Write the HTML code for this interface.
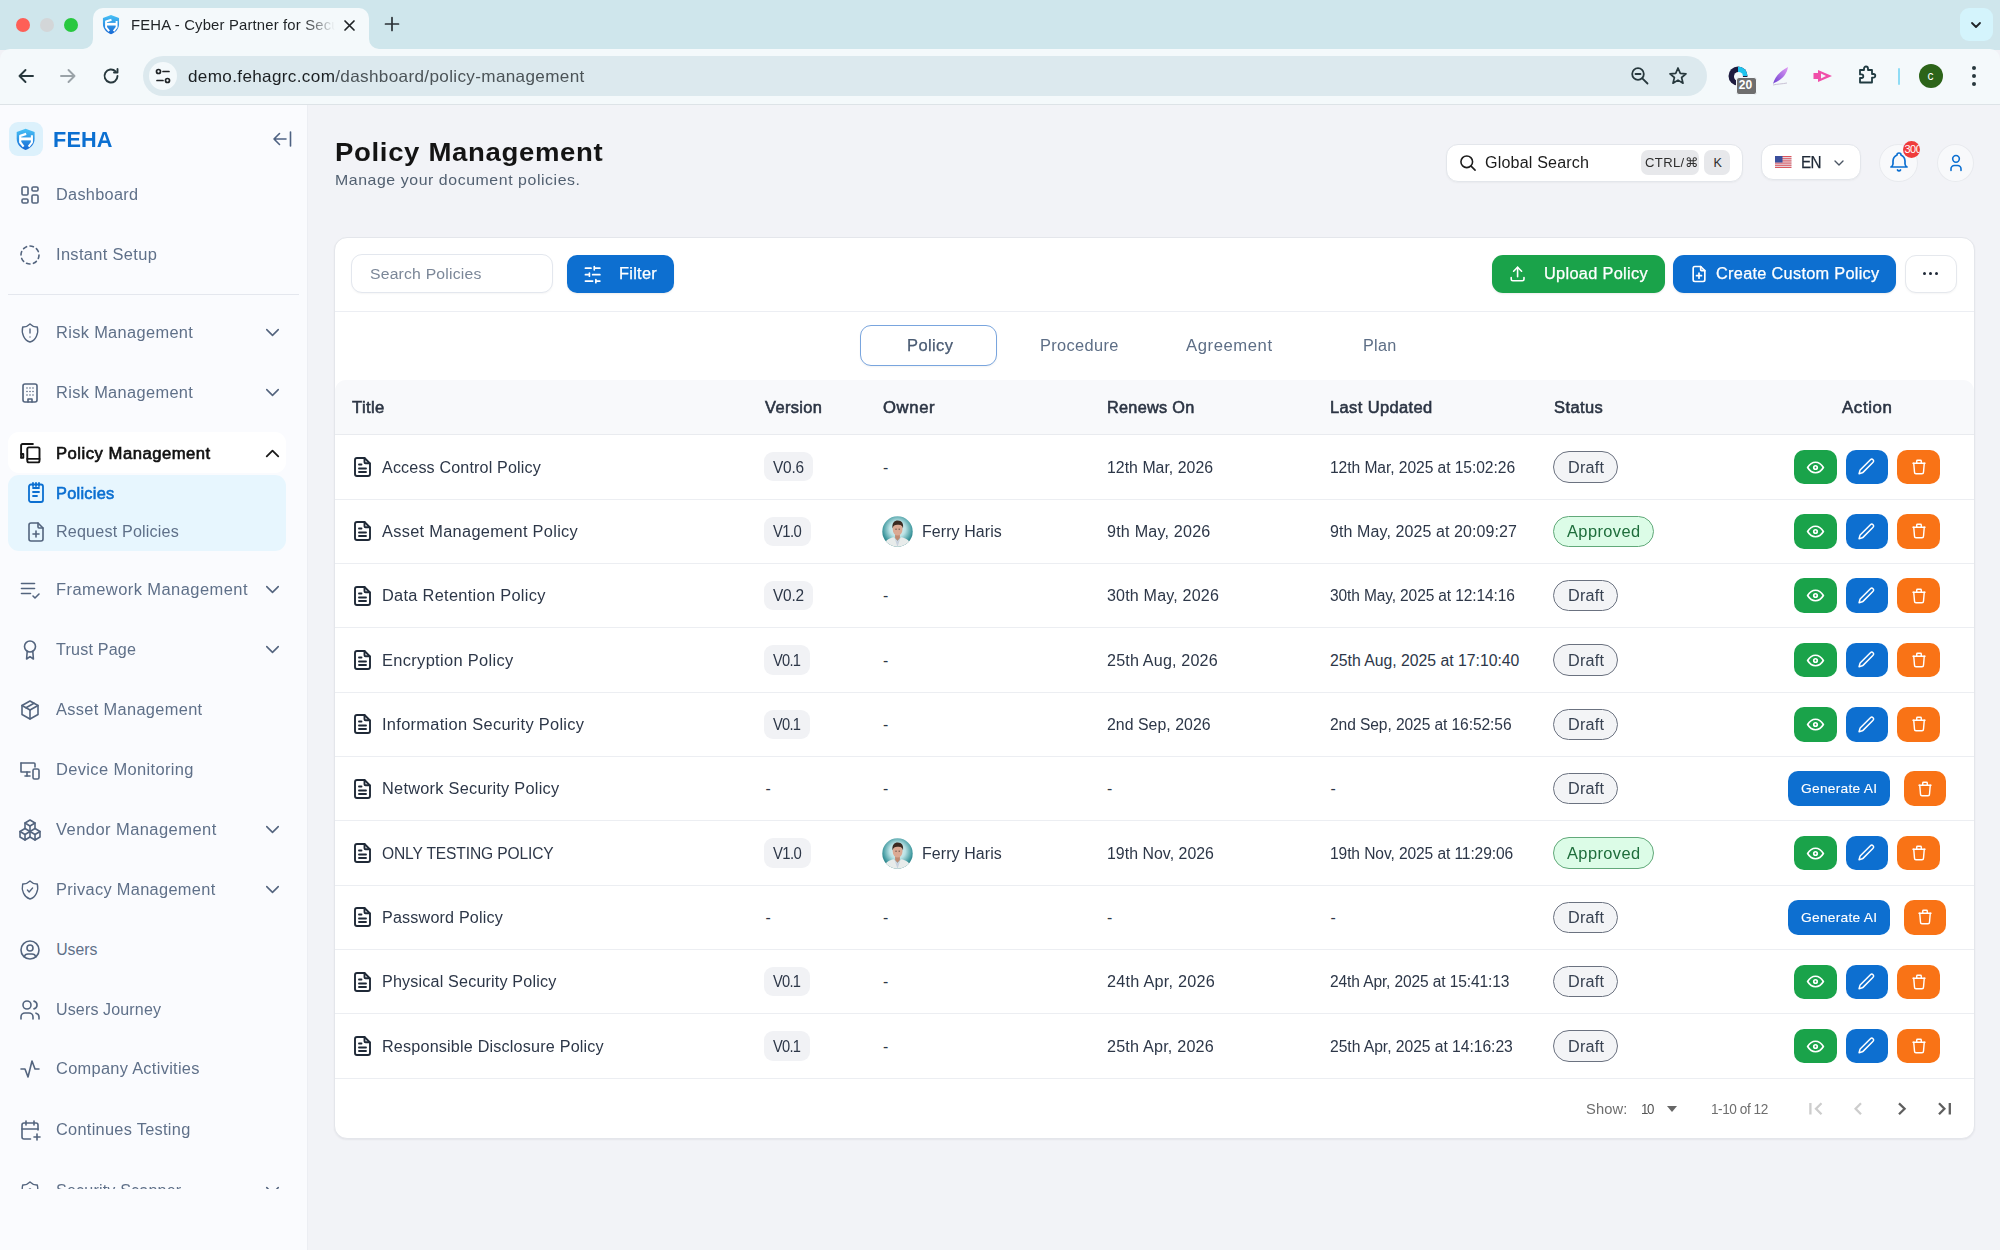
<!DOCTYPE html>
<html><head><meta charset="utf-8"><title>FEHA - Policy Management</title>
<style>
html,body{margin:0;padding:0;width:2000px;height:1250px;overflow:hidden;background:#f1f2f6;font-family:"Liberation Sans",sans-serif}
.t{position:absolute;white-space:nowrap;line-height:1}
svg{display:block}
</style></head><body>
<div style="position:absolute;left:0.00px;top:0.00px;width:2000.00px;height:50.00px;background:#cfe6ec"></div>
<div style="position:absolute;left:15.50px;top:17.50px;width:14.00px;height:14.00px;background:#fe5f57;border-radius:50%"></div>
<div style="position:absolute;left:39.50px;top:17.50px;width:14.00px;height:14.00px;background:#d3d6d8;border-radius:50%"></div>
<div style="position:absolute;left:63.50px;top:17.50px;width:14.00px;height:14.00px;background:#28c840;border-radius:50%"></div>
<div style="position:absolute;left:93.00px;top:8.00px;width:276.00px;height:42.00px;background:#f4f9fb;border-radius:10px 10px 0 0"></div>
<svg style="position:absolute;left:83.00px;top:39.00px;" width="10.00" height="10.00" viewBox="0 0 10 10" fill="none"><path d="M0 10 A10 10 0 0 0 10 0 V10 Z" fill="#f4f9fb"/></svg>
<svg style="position:absolute;left:369.00px;top:39.00px;" width="10.00" height="10.00" viewBox="0 0 10 10" fill="none"><path d="M10 10 A10 10 0 0 1 0 0 V10 Z" fill="#f4f9fb"/></svg>
<svg style="position:absolute;left:96.10px;top:9.00px;" width="30.60" height="30.60" viewBox="0 0 34 34" fill="none"><defs><linearGradient id="fg" x1="0" y1="0" x2="0" y2="1"><stop offset="0" stop-color="#48c2f6"/><stop offset="1" stop-color="#1668d4"/></linearGradient></defs><path d="M16.65 6.7 L25.6 9.9 V16.8 C25.6 22.2 21.8 26 16.65 28.1 C11.5 26 7.7 22.2 7.7 16.8 V9.9 Z" fill="url(#fg)"/><g stroke="#fff" fill="none" stroke-linejoin="round"><path d="M17.2 11.9 L11.2 13.9 V20.3 L14.6 24.6" stroke-width="2.2"/><path d="M22.9 13.3 V20.3 L19.6 24.6" stroke-width="2.1"/><path d="M11.2 16.9 H22.9" stroke-width="2.9"/></g></svg>
<div style="position:absolute;left:125px;top:8px;width:210px;height:34px;overflow:hidden;-webkit-mask-image:linear-gradient(90deg,#000 85%,transparent 100%)">
<div class="t" style="left:6.40px;top:9.72px;font-size:14.50px;color:#1f2326;transform:scaleX(1.0240);transform-origin:0 0;letter-spacing:0.164px;">FEHA - Cyber Partner for Security</div>
</div>
<svg style="position:absolute;left:343.00px;top:18.50px;" width="13.00" height="13.00" viewBox="0 0 13 13" fill="none"><g stroke="#1f2326" stroke-width="1.7" stroke-linecap="round" stroke-linejoin="round"><path d="M2 2 L11 11 M11 2 L2 11"/></g></svg>
<svg style="position:absolute;left:384.00px;top:16.00px;" width="16.00" height="16.00" viewBox="0 0 16 16" fill="none"><g stroke="#2b3135" stroke-width="1.7" stroke-linecap="round" stroke-linejoin="round"><path d="M8 1.5 V14.5 M1.5 8 H14.5"/></g></svg>
<div style="position:absolute;left:1959.50px;top:8.00px;width:33.00px;height:33.00px;background:#d4f4fc;border-radius:9px"></div>
<svg style="position:absolute;left:1969.00px;top:18.00px;" width="14.00" height="14.00" viewBox="0 0 14 14" fill="none"><path d="M3 5 L7 9 L11 5" stroke="#1f2326" stroke-width="1.8" fill="none" stroke-linecap="round" stroke-linejoin="round"/></svg>
<div style="position:absolute;left:0.00px;top:49.00px;width:2000.00px;height:55.00px;background:#f4f9fb;border-radius:10px 10px 0 0"></div>
<div style="position:absolute;left:0.00px;top:104.00px;width:2000.00px;height:1.00px;background:#dde3e7"></div>
<svg style="position:absolute;left:16.00px;top:66.00px;" width="20.00" height="20.00" viewBox="0 0 20 20" fill="none"><path d="M17 10 H3.5 M9.5 4 L3.5 10 L9.5 16" stroke="#27383d" stroke-width="1.9" fill="none" stroke-linecap="round" stroke-linejoin="round"/></svg>
<svg style="position:absolute;left:58.00px;top:66.00px;" width="20.00" height="20.00" viewBox="0 0 20 20" fill="none"><path d="M3 10 H16.5 M10.5 4 L16.5 10 L10.5 16" stroke="#9aa3a8" stroke-width="1.9" fill="none" stroke-linecap="round" stroke-linejoin="round"/></svg>
<svg style="position:absolute;left:101.00px;top:66.00px;" width="20.00" height="20.00" viewBox="0 0 20 20" fill="none"><path d="M16.5 10 A6.5 6.5 0 1 1 14.6 5.4" stroke="#27383d" stroke-width="1.9" fill="none" stroke-linecap="round"/><path d="M16.5 3 V6.5 H13" stroke="#27383d" stroke-width="1.9" fill="none" stroke-linecap="round" stroke-linejoin="round"/></svg>
<div style="position:absolute;left:143.00px;top:56.00px;width:1564.00px;height:40.00px;background:#dce9ee;border-radius:20px"></div>
<div style="position:absolute;left:149.00px;top:62.00px;width:28.00px;height:28.00px;background:#f4f9fb;border-radius:50%"></div>
<svg style="position:absolute;left:153.00px;top:66.00px;" width="20.00" height="20.00" viewBox="0 0 20 20" fill="none"><g stroke="#1f2326" stroke-width="1.7" fill="none" stroke-linecap="round"><circle cx="5.5" cy="5.5" r="2"/><path d="M10 5.5 H16"/><path d="M4 14.5 H10"/><circle cx="14.5" cy="14.5" r="2"/></g></svg>
<div class="t" style="left:187.80px;top:67.83px;font-size:16.50px;color:#1b1f22;transform:scaleX(1.0380);transform-origin:0 0;letter-spacing:0.325px;">demo.fehagrc.com<span style="color:#4b5357">/dashboard/policy-management</span></div>
<svg style="position:absolute;left:1630.00px;top:66.00px;" width="20.00" height="20.00" viewBox="0 0 20 20" fill="none"><g stroke="#27383d" stroke-width="1.8" fill="none" stroke-linecap="round"><circle cx="8" cy="8" r="5.8"/><path d="M5.5 8 H10.5"/><path d="M12.3 12.3 L17.5 17.5"/></g></svg>
<svg style="position:absolute;left:1668.00px;top:66.00px;" width="20.00" height="20.00" viewBox="0 0 20 20" fill="none"><path d="M10 2 L12.3 7.4 L18 7.8 L13.6 11.5 L15 17.2 L10 14.1 L5 17.2 L6.4 11.5 L2 7.8 L7.7 7.4 Z" stroke="#27383d" stroke-width="1.7" fill="none" stroke-linejoin="round"/></svg>
<svg style="position:absolute;left:1727.00px;top:65.00px;" width="22.00" height="22.00" viewBox="0 0 22 22" fill="none"><circle cx="11" cy="11" r="9.5" fill="#1d1b3f"/><path d="M11 1.5 A9.5 9.5 0 0 1 20.5 11 L11 11 Z" fill="#1fc4ee"/><circle cx="11.5" cy="11.5" r="4.5" fill="#f3f8fb"/></svg>
<div style="position:absolute;left:1736.00px;top:77.00px;width:19.00px;height:15.50px;background:#6e6e6e;border-radius:3px;border:1px solid #f3f8fb"></div>
<div class="t" style="left:1736px;top:78px;width:19px;text-align:center;font-size:12px;line-height:14px;font-weight:700;color:#fff">20</div>
<svg style="position:absolute;left:1770.00px;top:65.00px;" width="22.00" height="22.00" viewBox="0 0 22 22" fill="none"><defs><linearGradient id="fe" x1="0" y1="1" x2="1" y2="0"><stop offset="0" stop-color="#6d3fd1"/><stop offset="1" stop-color="#e29cf4"/></linearGradient></defs><path d="M3 19 C5 12 10 6 18 2 C17 9 12 15 4 18 Z" fill="url(#fe)"/><path d="M3 20 C7 19 12 19 17 18" stroke="#c9c3d6" stroke-width="1" fill="none"/></svg>
<svg style="position:absolute;left:1812.00px;top:65.00px;" width="22.00" height="22.00" viewBox="0 0 22 22" fill="none"><path d="M1.5 8 H6 V5 L20 11 L6 17 V14 H1.5 Z" fill="#f04fa9"/><path d="M9 8.5 L14 11 L9 13.5 Z" fill="#f3f8fb"/></svg>
<svg style="position:absolute;left:1856.00px;top:64.00px;" width="22.00" height="22.00" viewBox="0 0 22 22" fill="none"><path d="M4 6 H8 V4.5 A2 2 0 0 1 12 4.5 V6 H16 V10 H17.5 A1.8 1.8 0 0 1 17.5 13.6 H16 V18.5 H4 V14 H5.5 A1.8 1.8 0 0 0 5.5 10.4 H4 Z" stroke="#1f3a40" stroke-width="1.8" fill="none" stroke-linejoin="round"/></svg>
<div style="position:absolute;left:1897.80px;top:67.50px;width:2.20px;height:17.50px;background:#8fdcf5;border-radius:1px"></div>
<div style="position:absolute;left:1918.50px;top:64.00px;width:24.00px;height:24.00px;background:#2c6419;border-radius:50%"></div>
<div class="t" style="left:1918.5px;top:69px;width:24px;text-align:center;font-size:12px;line-height:14px;color:#fff">c</div>
<div style="position:absolute;left:1971.50px;top:66.00px;width:4.00px;height:4.00px;background:#27383d;border-radius:50%"></div>
<div style="position:absolute;left:1971.50px;top:74.00px;width:4.00px;height:4.00px;background:#27383d;border-radius:50%"></div>
<div style="position:absolute;left:1971.50px;top:82.00px;width:4.00px;height:4.00px;background:#27383d;border-radius:50%"></div>
<div style="position:absolute;left:0.00px;top:105.00px;width:2000.00px;height:1145.00px;background:#f2f3f7"></div>
<div style="position:absolute;left:0.00px;top:105.00px;width:308.00px;height:1145.00px;background:#fafbfe;border-right:1px solid #eceef3;box-sizing:border-box"></div>
<div style="position:absolute;left:9.00px;top:122.00px;width:34.00px;height:34.00px;background:#dcf1fc;border-radius:9px"></div>
<svg style="position:absolute;left:9.00px;top:122.00px;" width="34.00" height="34.00" viewBox="0 0 34 34" fill="none"><defs><linearGradient id="lg" x1="0" y1="0" x2="0" y2="1"><stop offset="0" stop-color="#48c2f6"/><stop offset="1" stop-color="#1668d4"/></linearGradient></defs><path d="M16.65 6.7 L25.6 9.9 V16.8 C25.6 22.2 21.8 26 16.65 28.1 C11.5 26 7.7 22.2 7.7 16.8 V9.9 Z" fill="url(#lg)"/><g stroke="#fff" fill="none" stroke-linejoin="round"><path d="M17.2 11.9 L11.2 13.9 V20.3 L14.6 24.6" stroke-width="2.2"/><path d="M22.9 13.3 V20.3 L19.6 24.6" stroke-width="2.1"/><path d="M11.2 16.9 H22.9" stroke-width="2.9"/></g></svg>
<div class="t" style="left:53.20px;top:129.80px;font-size:21.50px;color:#0b6fd1;transform:scaleX(1.0085);transform-origin:0 0;font-weight:700;letter-spacing:0.166px;">FEHA</div>
<svg style="position:absolute;left:272.00px;top:131.00px;" width="20.00" height="16.00" viewBox="0 0 20 16" fill="none"><g stroke="#4e6282" stroke-width="1.6" fill="none" stroke-linecap="round" stroke-linejoin="round"><path d="M2 8 H14 M7.5 2.5 L2 8 L7.5 13.5"/><path d="M18.5 1 V15"/></g></svg>
<svg style="position:absolute;left:18.00px;top:182.60px;" width="24.00" height="24.00" viewBox="0 0 24 24" fill="none"><g stroke="#53647e" stroke-width="1.6" stroke-linecap="round" stroke-linejoin="round"><rect x="4" y="4" width="6" height="8" rx="1.3"/><rect x="4" y="16" width="6" height="4" rx="1.3"/><rect x="14" y="12" width="6" height="8" rx="1.3"/><rect x="14" y="4" width="6" height="4" rx="1.3"/></g></svg>
<div class="t" style="left:56.20px;top:186.82px;font-size:15.80px;color:#5f7089;transform:scaleX(1.0307);transform-origin:0 0;letter-spacing:0.295px;">Dashboard</div>
<svg style="position:absolute;left:18.00px;top:242.80px;" width="24.00" height="24.00" viewBox="0 0 24 24" fill="none"><g stroke="#53647e" stroke-width="1.6" stroke-linecap="round" stroke-linejoin="round"><path d="M8.56 3.69a9 9 0 0 0 -2.92 1.95"/><path d="M3.69 8.56a9 9 0 0 0 -.69 3.44"/><path d="M3.69 15.44a9 9 0 0 0 1.95 2.92"/><path d="M8.56 20.31a9 9 0 0 0 3.44 .69"/><path d="M15.44 20.31a9 9 0 0 0 2.92 -1.95"/><path d="M20.31 15.44a9 9 0 0 0 .69 -3.44"/><path d="M20.31 8.56a9 9 0 0 0 -1.95 -2.92"/><path d="M15.44 3.69a9 9 0 0 0 -3.44 -.69"/></g></svg>
<div class="t" style="left:56.20px;top:247.02px;font-size:15.80px;color:#5f7089;transform:scaleX(1.0408);transform-origin:0 0;letter-spacing:0.315px;">Instant Setup</div>
<svg style="position:absolute;left:18.00px;top:321.10px;" width="24.00" height="24.00" viewBox="0 0 24 24" fill="none"><g stroke="#53647e" stroke-width="1.6" stroke-linecap="round" stroke-linejoin="round"><g transform="translate(12 0) scale(0.86 1) translate(-12 0)"><path d="M12 3a12 12 0 0 0 8.5 3a12 12 0 0 1 -8.5 15a12 12 0 0 1 -8.5 -15a12 12 0 0 0 8.5 -3"/><path d="M12 8v4"/><path d="M12 16h.01"/></g></g></svg>
<div class="t" style="left:56.20px;top:325.32px;font-size:15.80px;color:#5f7089;transform:scaleX(1.0369);transform-origin:0 0;letter-spacing:0.334px;">Risk Management</div>
<svg style="position:absolute;left:260.80px;top:321.10px;" width="23.00" height="23.00" viewBox="0 0 24 24" fill="none"><g stroke="#53647e" stroke-width="1.6" stroke-linecap="round" stroke-linejoin="round"><path d="M6 9l6 6l6 -6"/></g></svg>
<svg style="position:absolute;left:18.00px;top:381.10px;" width="24.00" height="24.00" viewBox="0 0 24 24" fill="none"><g stroke="#53647e" stroke-width="1.6" stroke-linecap="round" stroke-linejoin="round"><rect x="5" y="3" width="14" height="18" rx="2"/><path d="M9 7h.01M12 7h.01M15 7h.01M9 10.5h.01M12 10.5h.01M15 10.5h.01M9 14h.01M12 14h.01M15 14h.01"/><path d="M10 21v-3h4v3"/></g></svg>
<div class="t" style="left:56.20px;top:385.32px;font-size:15.80px;color:#5f7089;transform:scaleX(1.0369);transform-origin:0 0;letter-spacing:0.334px;">Risk Management</div>
<svg style="position:absolute;left:260.80px;top:381.10px;" width="23.00" height="23.00" viewBox="0 0 24 24" fill="none"><g stroke="#53647e" stroke-width="1.6" stroke-linecap="round" stroke-linejoin="round"><path d="M6 9l6 6l6 -6"/></g></svg>
<svg style="position:absolute;left:18.00px;top:577.90px;" width="24.00" height="24.00" viewBox="0 0 24 24" fill="none"><g stroke="#53647e" stroke-width="1.6" stroke-linecap="round" stroke-linejoin="round"><path d="M3.5 5.5h13"/><path d="M3.5 10.5h13"/><path d="M3.5 15.5h9"/><path d="M15 18l2 2l4 -4"/></g></svg>
<div class="t" style="left:56.20px;top:582.12px;font-size:15.80px;color:#5f7089;transform:scaleX(1.0443);transform-origin:0 0;letter-spacing:0.409px;">Framework Management</div>
<svg style="position:absolute;left:260.80px;top:577.90px;" width="23.00" height="23.00" viewBox="0 0 24 24" fill="none"><g stroke="#53647e" stroke-width="1.6" stroke-linecap="round" stroke-linejoin="round"><path d="M6 9l6 6l6 -6"/></g></svg>
<svg style="position:absolute;left:18.00px;top:637.90px;" width="24.00" height="24.00" viewBox="0 0 24 24" fill="none"><g stroke="#53647e" stroke-width="1.6" stroke-linecap="round" stroke-linejoin="round"><circle cx="12" cy="8.5" r="5.5"/><path d="M9.2 13.3 L8.6 21 L12 18.6 L15.4 21 L14.8 13.3"/></g></svg>
<div class="t" style="left:56.20px;top:642.12px;font-size:15.80px;color:#5f7089;transform:scaleX(1.0213);transform-origin:0 0;letter-spacing:0.181px;">Trust Page</div>
<svg style="position:absolute;left:260.80px;top:637.90px;" width="23.00" height="23.00" viewBox="0 0 24 24" fill="none"><g stroke="#53647e" stroke-width="1.6" stroke-linecap="round" stroke-linejoin="round"><path d="M6 9l6 6l6 -6"/></g></svg>
<svg style="position:absolute;left:18.00px;top:697.90px;" width="24.00" height="24.00" viewBox="0 0 24 24" fill="none"><g stroke="#53647e" stroke-width="1.6" stroke-linecap="round" stroke-linejoin="round"><path d="M12 3l8 4.5l0 9l-8 4.5l-8 -4.5l0 -9l8 -4.5"/><path d="M12 12l8 -4.5"/><path d="M12 12l0 9"/><path d="M12 12l-8 -4.5"/><path d="M16 5.25l-8 4.5"/></g></svg>
<div class="t" style="left:56.20px;top:702.12px;font-size:15.80px;color:#5f7089;transform:scaleX(1.0364);transform-origin:0 0;letter-spacing:0.329px;">Asset Management</div>
<svg style="position:absolute;left:18.00px;top:757.70px;" width="24.00" height="24.00" viewBox="0 0 24 24" fill="none"><g stroke="#53647e" stroke-width="1.6" stroke-linecap="round" stroke-linejoin="round"><path d="M3 5h13a1 1 0 0 1 1 1v3"/><path d="M3 5v9h9"/><path d="M7 18h5"/><path d="M9 14v4"/><rect x="15" y="11" width="6" height="10" rx="1.5"/></g></svg>
<div class="t" style="left:56.20px;top:761.92px;font-size:15.80px;color:#5f7089;transform:scaleX(1.0427);transform-origin:0 0;letter-spacing:0.337px;">Device Monitoring</div>
<svg style="position:absolute;left:18.00px;top:817.70px;" width="24.00" height="24.00" viewBox="0 0 24 24" fill="none"><g stroke="#53647e" stroke-width="1.6" stroke-linecap="round" stroke-linejoin="round"><path d="M7 16.5l-5 -3l5 -3l5 3v5.5l-5 3z"/><path d="M2 13.5v5.5l5 3"/><path d="M7 16.545l5 -3.03"/><path d="M17 16.5l-5 -3l5 -3l5 3v5.5l-5 3z"/><path d="M12 19l5 3"/><path d="M17 16.5l5 -3"/><path d="M12 13.5v-5.5l-5 -3l5 -3l5 3v5.5"/><path d="M7 5.03v5.455"/><path d="M12 8l5 -3"/></g></svg>
<div class="t" style="left:56.20px;top:821.92px;font-size:15.80px;color:#5f7089;transform:scaleX(1.0453);transform-origin:0 0;letter-spacing:0.414px;">Vendor Management</div>
<svg style="position:absolute;left:260.80px;top:817.70px;" width="23.00" height="23.00" viewBox="0 0 24 24" fill="none"><g stroke="#53647e" stroke-width="1.6" stroke-linecap="round" stroke-linejoin="round"><path d="M6 9l6 6l6 -6"/></g></svg>
<svg style="position:absolute;left:18.00px;top:877.90px;" width="24.00" height="24.00" viewBox="0 0 24 24" fill="none"><g stroke="#53647e" stroke-width="1.6" stroke-linecap="round" stroke-linejoin="round"><g transform="translate(12 0) scale(0.86 1) translate(-12 0)"><path d="M11.46 20.846a12 12 0 0 1 -7.96 -14.846a12 12 0 0 0 8.5 -3a12 12 0 0 0 8.5 3a12 12 0 0 1 -8.5 15"/><path d="M9 12l2 2l4 -4"/></g></g></svg>
<div class="t" style="left:56.20px;top:882.12px;font-size:15.80px;color:#5f7089;transform:scaleX(1.0358);transform-origin:0 0;letter-spacing:0.312px;">Privacy Management</div>
<svg style="position:absolute;left:260.80px;top:877.90px;" width="23.00" height="23.00" viewBox="0 0 24 24" fill="none"><g stroke="#53647e" stroke-width="1.6" stroke-linecap="round" stroke-linejoin="round"><path d="M6 9l6 6l6 -6"/></g></svg>
<svg style="position:absolute;left:18.00px;top:937.90px;" width="24.00" height="24.00" viewBox="0 0 24 24" fill="none"><g stroke="#53647e" stroke-width="1.6" stroke-linecap="round" stroke-linejoin="round"><path d="M12 12m-9 0a9 9 0 1 0 18 0a9 9 0 1 0 -18 0"/><path d="M12 10m-3 0a3 3 0 1 0 6 0a3 3 0 1 0 -6 0"/><path d="M6.168 18.849a4 4 0 0 1 3.832 -2.849h4a4 4 0 0 1 3.834 2.855"/></g></svg>
<div class="t" style="left:56.20px;top:942.12px;font-size:15.80px;color:#5f7089;letter-spacing:-0.016px;">Users</div>
<svg style="position:absolute;left:18.00px;top:997.70px;" width="24.00" height="24.00" viewBox="0 0 24 24" fill="none"><g stroke="#53647e" stroke-width="1.6" stroke-linecap="round" stroke-linejoin="round"><path d="M9 7m-4 0a4 4 0 1 0 8 0a4 4 0 1 0 -8 0"/><path d="M3 21v-2a4 4 0 0 1 4 -4h4a4 4 0 0 1 4 4v2"/><path d="M16 3.13a4 4 0 0 1 0 7.75"/><path d="M21 21v-2a4 4 0 0 0 -3 -3.85"/></g></svg>
<div class="t" style="left:56.20px;top:1001.92px;font-size:15.80px;color:#5f7089;transform:scaleX(1.0152);transform-origin:0 0;letter-spacing:0.128px;">Users Journey</div>
<svg style="position:absolute;left:18.00px;top:1057.20px;" width="24.00" height="24.00" viewBox="0 0 24 24" fill="none"><g stroke="#53647e" stroke-width="1.6" stroke-linecap="round" stroke-linejoin="round"><path d="M3 12h4l3 8l4 -16l3 8h4"/></g></svg>
<div class="t" style="left:56.20px;top:1061.42px;font-size:15.80px;color:#5f7089;transform:scaleX(1.0369);transform-origin:0 0;letter-spacing:0.289px;">Company Activities</div>
<svg style="position:absolute;left:18.00px;top:1117.70px;" width="24.00" height="24.00" viewBox="0 0 24 24" fill="none"><g stroke="#53647e" stroke-width="1.6" stroke-linecap="round" stroke-linejoin="round"><path d="M12.5 21h-6.5a2 2 0 0 1 -2 -2v-12a2 2 0 0 1 2 -2h12a2 2 0 0 1 2 2v5"/><path d="M16 3v4"/><path d="M8 3v4"/><path d="M4 11h16"/><path d="M16 19h6"/><path d="M19 16v6"/></g></svg>
<div class="t" style="left:56.20px;top:1121.92px;font-size:15.80px;color:#5f7089;transform:scaleX(1.0351);transform-origin:0 0;letter-spacing:0.274px;">Continues Testing</div>
<div style="position:absolute;left:8.00px;top:293.50px;width:291.00px;height:1.50px;background:#e4e7ee"></div>
<div style="position:absolute;left:8.00px;top:432.00px;width:278.00px;height:41.00px;background:#ffffff;border-radius:11px"></div>
<svg style="position:absolute;left:17.50px;top:441.00px;" width="24.00" height="24.00" viewBox="0 0 24 24" fill="none"><g stroke="#141414" stroke-width="1.9" stroke-linecap="round" stroke-linejoin="round"><path d="M14.9 3 H4.6 A1.5 1.5 0 0 0 3.1 4.5 V16.5"/><path d="M3.1 13 H5.3 V16.8 H3.1"/><rect x="9.3" y="6.4" width="12.2" height="15" rx="1.6"/><path d="M9.3 17.9 H21.5"/></g></svg>
<div class="t" style="left:56.20px;top:445.82px;font-size:15.80px;color:#111111;transform:scaleX(1.0543);transform-origin:0 0;-webkit-text-stroke:0.6px #111111;letter-spacing:0.469px;">Policy Management</div>
<svg style="position:absolute;left:260.80px;top:441.60px;" width="23.00" height="23.00" viewBox="0 0 24 24" fill="none"><g stroke="#1b1b1b" stroke-width="1.9" stroke-linecap="round" stroke-linejoin="round"><path d="M6 15l6 -6l6 6"/></g></svg>
<div style="position:absolute;left:8.00px;top:475.00px;width:278.00px;height:75.50px;background:#e7f6fe;border-radius:11px"></div>
<svg style="position:absolute;left:24.00px;top:481.40px;" width="24.00" height="24.00" viewBox="0 0 24 24" fill="none"><g stroke="#0b6fd1" stroke-width="1.8" stroke-linecap="round" stroke-linejoin="round"><rect x="5" y="3.5" width="14" height="17.5" rx="2"/><path d="M9 7h6"/><path d="M9 11h6"/><path d="M9 15h4"/><path d="M9 2v3M12 2v3M15 2v3"/></g></svg>
<div class="t" style="left:56.20px;top:485.62px;font-size:15.80px;color:#0b6fd1;transform:scaleX(1.0340);transform-origin:0 0;-webkit-text-stroke:0.6px #0b6fd1;letter-spacing:0.263px;">Policies</div>
<svg style="position:absolute;left:24.00px;top:520.10px;" width="24.00" height="24.00" viewBox="0 0 24 24" fill="none"><g stroke="#53647e" stroke-width="1.6" stroke-linecap="round" stroke-linejoin="round"><path d="M14 3v4a1 1 0 0 0 1 1h4"/><path d="M17 21h-10a2 2 0 0 1 -2 -2v-14a2 2 0 0 1 2 -2h7l5 5v11a2 2 0 0 1 -2 2z"/><path d="M12 11l0 6"/><path d="M9 14l6 0"/></g></svg>
<div class="t" style="left:56.20px;top:524.22px;font-size:15.80px;color:#5f7089;transform:scaleX(1.0216);transform-origin:0 0;letter-spacing:0.169px;">Request Policies</div>
<div style="position:absolute;left:0;top:1160px;width:307px;height:28.8px;overflow:hidden">
<svg style="position:absolute;left:18.00px;top:18.70px;" width="24.00" height="24.00" viewBox="0 0 24 24" fill="none"><g stroke="#53647e" stroke-width="1.6" stroke-linecap="round" stroke-linejoin="round"><g transform="translate(12 0) scale(0.86 1) translate(-12 0)"><path d="M12 3a12 12 0 0 0 8.5 3a12 12 0 0 1 -8.5 15a12 12 0 0 1 -8.5 -15a12 12 0 0 0 8.5 -3"/><path d="M12 11m-1 0a1 1 0 1 0 2 0a1 1 0 1 0 -2 0"/></g></g></svg>
<div class="t" style="left:56.20px;top:23.42px;font-size:15.80px;color:#5f7089;transform:scaleX(1.0203);transform-origin:0 0;letter-spacing:0.163px;">Security Scanner</div>
<svg style="position:absolute;left:260.80px;top:18.70px;" width="23.00" height="23.00" viewBox="0 0 24 24" fill="none"><g stroke="#53647e" stroke-width="1.6" stroke-linecap="round" stroke-linejoin="round"><path d="M6 9l6 6l6 -6"/></g></svg>
</div>
<div class="t" style="left:335.00px;top:138.56px;font-size:26.50px;color:#141414;transform:scaleX(1.0403);transform-origin:0 0;font-weight:700;letter-spacing:0.623px;">Policy Management</div>
<div class="t" style="left:335.20px;top:173.47px;font-size:14.80px;color:#526071;transform:scaleX(1.0725);transform-origin:0 0;letter-spacing:0.531px;">Manage your document policies.</div>
<div style="position:absolute;left:1446.30px;top:143.60px;width:297.00px;height:38.40px;background:#fff;border:1px solid #e3e6eb;border-radius:12px;box-sizing:border-box;box-shadow:0 1px 2px rgba(0,0,0,.04)"></div>
<svg style="position:absolute;left:1458.30px;top:153.20px;" width="20.00" height="20.00" viewBox="0 0 24 24" fill="none"><g stroke="#1c1c1c" stroke-width="1.9" stroke-linecap="round" stroke-linejoin="round"><path d="M10.5 10.5m-7 0a7 7 0 1 0 14 0a7 7 0 1 0 -14 0"/><path d="M20.5 20.5l-4.8 -4.8"/></g></svg>
<div class="t" style="left:1485.40px;top:155.02px;font-size:15.80px;color:#1c1c1c;transform:scaleX(1.0191);transform-origin:0 0;letter-spacing:0.159px;">Global Search</div>
<div style="position:absolute;left:1641.40px;top:150.20px;width:58.00px;height:25.00px;background:#e7e8eb;border-radius:7px"></div>
<div class="t" style="left:1645.40px;top:157.13px;font-size:12.60px;color:#2e2e2e;transform:scaleX(1.0384);transform-origin:0 0;letter-spacing:0.353px;">CTRL/⌘</div>
<div style="position:absolute;left:1704.40px;top:150.20px;width:25.80px;height:25.00px;background:#e7e8eb;border-radius:7px"></div>
<div class="t" style="left:1713.60px;top:157.13px;font-size:12.60px;color:#2e2e2e;">K</div>
<div style="position:absolute;left:1761.40px;top:144.40px;width:100.00px;height:36.00px;background:#fff;border:1px solid #e3e6eb;border-radius:12px;box-sizing:border-box;box-shadow:0 1px 2px rgba(0,0,0,.04)"></div>
<svg style="position:absolute;left:1775.00px;top:155.50px;" width="16.50" height="12.00" viewBox="0 0 16.5 12" fill="none"><rect width="16.5" height="12" rx="1.5" fill="#e8eef6"/><rect y="0.00" width="16.5" height="0.92" fill="#d9464e"/><rect y="1.85" width="16.5" height="0.92" fill="#d9464e"/><rect y="3.70" width="16.5" height="0.92" fill="#d9464e"/><rect y="5.55" width="16.5" height="0.92" fill="#d9464e"/><rect y="7.40" width="16.5" height="0.92" fill="#d9464e"/><rect y="9.25" width="16.5" height="0.92" fill="#d9464e"/><rect y="11.10" width="16.5" height="0.92" fill="#d9464e"/><rect width="7.5" height="6.5" fill="#3b4f9c"/></svg>
<div class="t" style="left:1801.00px;top:155.12px;font-size:15.80px;color:#1f2937;transform:scaleX(0.9657);transform-origin:0 0;-webkit-text-stroke:0.25px #1f2937;letter-spacing:-0.750px;">EN</div>
<svg style="position:absolute;left:1831.00px;top:155.00px;" width="16.00" height="16.00" viewBox="0 0 24 24" fill="none"><g stroke="#4b5563" stroke-width="2" stroke-linecap="round" stroke-linejoin="round"><path d="M6 9l6 6l6 -6"/></g></svg>
<div style="position:absolute;left:1879.40px;top:143.80px;width:38.40px;height:38.40px;background:#f8f9fb;border:1px solid #e8eaee;border-radius:50%;box-sizing:border-box"></div>
<svg style="position:absolute;left:1886.90px;top:150.30px;" width="24.00" height="24.00" viewBox="0 0 24 24" fill="none"><g stroke="#0b6fd1" stroke-width="1.7" stroke-linecap="round" stroke-linejoin="round"><path d="M10 5a2 2 0 1 1 4 0a7 7 0 0 1 4 6v3a4 4 0 0 0 2 3h-16a4 4 0 0 0 2 -3v-3a7 7 0 0 1 4 -6"/><path d="M10.5 20a1.8 1.8 0 0 0 3 0"/></g></svg>
<div style="position:absolute;left:1902.5px;top:141px;width:17px;height:17px;border-radius:50%;background:#ef3b3b;overflow:hidden"><div class="t" style="left:2px;top:2px;font-size:11px;line-height:12px;color:#fff;letter-spacing:-0.5px">300</div></div>
<div style="position:absolute;left:1936.80px;top:143.80px;width:37.00px;height:38.40px;background:#f8f9fb;border:1px solid #e8eaee;border-radius:50%;box-sizing:border-box"></div>
<svg style="position:absolute;left:1945.50px;top:153.00px;" width="20.00" height="20.00" viewBox="0 0 24 24" fill="none"><g stroke="#0b6fd1" stroke-width="1.9" stroke-linecap="round" stroke-linejoin="round"><path d="M12 7m-4 0a4 4 0 1 0 8 0a4 4 0 1 0 -8 0"/><path d="M6 21v-2a4 4 0 0 1 4 -4h4a4 4 0 0 1 4 4v2"/></g></svg>
<div style="position:absolute;left:333.60px;top:237.00px;width:1641.40px;height:902.40px;background:#fff;border:1px solid #e4e6eb;border-radius:13px;box-sizing:border-box;box-shadow:0 1px 2px rgba(16,24,40,.06)"></div>
<div style="position:absolute;left:350.80px;top:254.20px;width:202.20px;height:39.30px;background:#fff;border:1px solid #e3e7ee;border-radius:11px;box-sizing:border-box;box-shadow:0 1px 2px rgba(0,0,0,.04)"></div>
<div class="t" style="left:369.60px;top:266.46px;font-size:15.40px;color:#7b8798;transform:scaleX(1.0242);transform-origin:0 0;letter-spacing:0.183px;">Search Policies</div>
<div style="position:absolute;left:566.70px;top:254.80px;width:107.00px;height:38.40px;background:#0d6fd0;border-radius:10px;box-shadow:0 1px 2px rgba(0,0,0,.08)"></div>
<svg style="position:absolute;left:582.60px;top:264.80px;" width="19.30" height="19.30" viewBox="0 0 24 24" fill="none"><g stroke="#ffffff" stroke-width="2.1" stroke-linecap="round" stroke-linejoin="round"><path d="M21 4h-7M10 4H3M21 12h-9M8 12H3M21 20h-5M12 20H3M14 2v4M8 10v4M16 18v4"/></g></svg>
<div class="t" style="left:618.80px;top:265.82px;font-size:15.80px;color:#ffffff;transform:scaleX(1.0365);transform-origin:0 0;-webkit-text-stroke:0.25px #ffffff;letter-spacing:0.255px;">Filter</div>
<div style="position:absolute;left:1491.80px;top:255.00px;width:173.20px;height:38.20px;background:#1aa34a;border-radius:11px;box-shadow:0 1px 2px rgba(0,0,0,.08)"></div>
<svg style="position:absolute;left:1508.30px;top:263.80px;" width="19.20" height="19.20" viewBox="0 0 24 24" fill="none"><g stroke="#ffffff" stroke-width="2" stroke-linecap="round" stroke-linejoin="round"><path d="M4 17v2a2 2 0 0 0 2 2h12a2 2 0 0 0 2 -2v-2"/><path d="M7 9l5 -5l5 5"/><path d="M12 4v12"/></g></svg>
<div class="t" style="left:1543.80px;top:265.52px;font-size:15.80px;color:#ffffff;transform:scaleX(1.0355);transform-origin:0 0;-webkit-text-stroke:0.25px #ffffff;letter-spacing:0.285px;">Upload Policy</div>
<div style="position:absolute;left:1673.00px;top:255.00px;width:222.80px;height:38.20px;background:#0d6fd0;border-radius:11px;box-shadow:0 1px 2px rgba(0,0,0,.08)"></div>
<svg style="position:absolute;left:1689.00px;top:264.00px;" width="20.00" height="20.00" viewBox="0 0 24 24" fill="none"><g stroke="#ffffff" stroke-width="2" stroke-linecap="round" stroke-linejoin="round"><path d="M14 3v4a1 1 0 0 0 1 1h4"/><path d="M17 21h-10a2 2 0 0 1 -2 -2v-14a2 2 0 0 1 2 -2h7l5 5v11a2 2 0 0 1 -2 2z"/><path d="M12 11l0 6"/><path d="M9 14l6 0"/></g></svg>
<div class="t" style="left:1716.00px;top:265.52px;font-size:15.80px;color:#ffffff;transform:scaleX(1.0337);transform-origin:0 0;-webkit-text-stroke:0.25px #ffffff;letter-spacing:0.270px;">Create Custom Policy</div>
<div style="position:absolute;left:1905.00px;top:255.00px;width:52.00px;height:38.20px;background:#fff;border:1px solid #e5e8ed;border-radius:11px;box-sizing:border-box;box-shadow:0 1px 2px rgba(0,0,0,.04)"></div>
<div style="position:absolute;left:1922.90px;top:272.20px;width:3.20px;height:3.20px;background:#1f2937;border-radius:50%"></div>
<div style="position:absolute;left:1928.90px;top:272.20px;width:3.20px;height:3.20px;background:#1f2937;border-radius:50%"></div>
<div style="position:absolute;left:1934.90px;top:272.20px;width:3.20px;height:3.20px;background:#1f2937;border-radius:50%"></div>
<div style="position:absolute;left:334.60px;top:310.50px;width:1639.40px;height:1.50px;background:#eceef3"></div>
<div style="position:absolute;left:860.40px;top:325.40px;width:137.00px;height:40.30px;background:#fff;border:1px solid #79a5de;border-radius:11px;box-sizing:border-box;box-shadow:0 1px 2px rgba(0,0,0,.05)"></div>
<div class="t" style="left:906.60px;top:338.42px;font-size:15.80px;color:#4a5b73;transform:scaleX(1.0443);transform-origin:0 0;-webkit-text-stroke:0.25px #4a5b73;letter-spacing:0.372px;">Policy</div>
<div class="t" style="left:1040.20px;top:338.42px;font-size:15.80px;color:#5d6e86;transform:scaleX(1.0370);transform-origin:0 0;letter-spacing:0.336px;">Procedure</div>
<div class="t" style="left:1185.90px;top:338.42px;font-size:15.80px;color:#5d6e86;transform:scaleX(1.0556);transform-origin:0 0;letter-spacing:0.535px;">Agreement</div>
<div class="t" style="left:1362.60px;top:338.42px;font-size:15.80px;color:#5d6e86;transform:scaleX(1.0251);transform-origin:0 0;letter-spacing:0.263px;">Plan</div>
<div style="position:absolute;left:334.60px;top:380.00px;width:1639.40px;height:54.50px;background:#f8f9fb;border-radius:11px 11px 0 0;border-bottom:1px solid #e9ebef;box-sizing:border-box"></div>
<div class="t" style="left:351.80px;top:400.22px;font-size:15.80px;color:#2b3443;transform:scaleX(1.0515);transform-origin:0 0;-webkit-text-stroke:0.55px #2b3443;letter-spacing:0.375px;">Title</div>
<div class="t" style="left:765.00px;top:400.22px;font-size:15.80px;color:#2b3443;transform:scaleX(1.0392);transform-origin:0 0;-webkit-text-stroke:0.55px #2b3443;letter-spacing:0.343px;">Version</div>
<div class="t" style="left:882.80px;top:400.22px;font-size:15.80px;color:#2b3443;transform:scaleX(1.0528);transform-origin:0 0;-webkit-text-stroke:0.55px #2b3443;letter-spacing:0.612px;">Owner</div>
<div class="t" style="left:1106.50px;top:400.22px;font-size:15.80px;color:#2b3443;transform:scaleX(1.0285);transform-origin:0 0;-webkit-text-stroke:0.55px #2b3443;letter-spacing:0.293px;">Renews On</div>
<div class="t" style="left:1330.00px;top:400.22px;font-size:15.80px;color:#2b3443;transform:scaleX(1.0431);transform-origin:0 0;-webkit-text-stroke:0.55px #2b3443;letter-spacing:0.367px;">Last Updated</div>
<div class="t" style="left:1553.50px;top:400.22px;font-size:15.80px;color:#2b3443;transform:scaleX(1.0436);transform-origin:0 0;-webkit-text-stroke:0.55px #2b3443;letter-spacing:0.389px;">Status</div>
<div class="t" style="left:1842.00px;top:400.22px;font-size:15.80px;color:#2b3443;transform:scaleX(1.0658);transform-origin:0 0;-webkit-text-stroke:0.55px #2b3443;letter-spacing:0.576px;">Action</div>
<svg style="position:absolute;left:352.50px;top:455.98px;" width="19.00" height="22.00" viewBox="0 0 19 22" fill="none"><g stroke="#1f2937" stroke-width="1.9" fill="none" stroke-linecap="round" stroke-linejoin="round"><path d="M11.5 2v4.2a1 1 0 0 0 1 1h4"/><path d="M15 20h-11a2 2 0 0 1 -2 -2v-14a2 2 0 0 1 2 -2h7.5l5.5 5.5v10.5a2 2 0 0 1 -2 2z"/><path d="M6 8.5h2.5M6 12.5h7M6 16h7"/></g></svg>
<div class="t" style="left:381.80px;top:459.50px;font-size:15.80px;color:#2d3748;transform:scaleX(1.0194);transform-origin:0 0;letter-spacing:0.147px;">Access Control Policy</div>
<div style="position:absolute;left:764.30px;top:452.18px;width:48.70px;height:29.30px;background:#f1f2f5;border-radius:9px"></div>
<div class="t" style="left:773.30px;top:459.50px;font-size:15.80px;color:#2d3748;transform:scaleX(0.9770);transform-origin:0 0;letter-spacing:-0.249px;">V0.6</div>
<div class="t" style="left:883.00px;top:459.50px;font-size:15.80px;color:#2d3748;">-</div>
<div class="t" style="left:1106.50px;top:459.50px;font-size:15.80px;color:#2d3748;transform:scaleX(1.0032);transform-origin:0 0;letter-spacing:0.026px;">12th Mar, 2026</div>
<div class="t" style="left:1330.00px;top:459.50px;font-size:15.80px;color:#2d3748;transform:scaleX(0.9900);transform-origin:0 0;letter-spacing:-0.075px;">12th Mar, 2025 at 15:02:26</div>
<div style="position:absolute;left:1553.30px;top:451.18px;width:65.00px;height:31.40px;background:#f3f4f6;border:1px solid #6b7280;border-radius:16px;box-sizing:border-box"></div>
<div class="t" style="left:1567.70px;top:459.50px;font-size:15.80px;color:#374151;transform:scaleX(1.0271);transform-origin:0 0;letter-spacing:0.231px;">Draft</div>
<div style="position:absolute;left:1794.00px;top:449.78px;width:42.70px;height:34.40px;background:#1aa34a;border-radius:10px"></div>
<svg style="position:absolute;left:1805.20px;top:456.58px;" width="21.00" height="21.00" viewBox="0 0 24 24" fill="none"><g stroke="#ffffff" stroke-width="1.95" stroke-linecap="round" stroke-linejoin="round"><path d="M10 12a2 2 0 1 0 4 0a2 2 0 0 0 -4 0"/><path d="M21 12c-2.4 4 -5.4 6 -9 6c-3.6 0 -6.6 -2 -9 -6c2.4 -4 5.4 -6 9 -6c3.6 0 6.6 2 9 6"/></g></svg>
<div style="position:absolute;left:1845.60px;top:449.78px;width:42.70px;height:34.40px;background:#0d6fd0;border-radius:10px"></div>
<svg style="position:absolute;left:1856.20px;top:456.18px;" width="21.00" height="21.00" viewBox="0 0 24 24" fill="none"><g stroke="#ffffff" stroke-width="1.7" stroke-linecap="round" stroke-linejoin="round"><path d="M19.5 7.2a2.1 2.1 0 0 0 -3 -3l-11.5 11.5a1.8 1.8 0 0 0 -.45 .75l-1.05 3.75l3.75 -1.05a1.8 1.8 0 0 0 .75 -.45z"/></g></svg>
<div style="position:absolute;left:1897.20px;top:449.78px;width:42.70px;height:34.40px;background:#f97316;border-radius:10px"></div>
<svg style="position:absolute;left:1909.50px;top:457.98px;" width="18.00" height="18.00" viewBox="0 0 24 24" fill="none"><g stroke="#ffffff" stroke-width="1.9" stroke-linecap="round" stroke-linejoin="round"><path d="M4 7l16 0"/><path d="M10 11l0 6" stroke-opacity="0"/><path d="M5 7l1 12a2 2 0 0 0 2 2h8a2 2 0 0 0 2 -2l1 -12"/><path d="M9 7v-3a1 1 0 0 1 1 -1h4a1 1 0 0 1 1 1v3"/></g></svg>
<div style="position:absolute;left:334.60px;top:499.00px;width:1639.40px;height:1.00px;background:#eceef2"></div>
<svg style="position:absolute;left:352.50px;top:520.32px;" width="19.00" height="22.00" viewBox="0 0 19 22" fill="none"><g stroke="#1f2937" stroke-width="1.9" fill="none" stroke-linecap="round" stroke-linejoin="round"><path d="M11.5 2v4.2a1 1 0 0 0 1 1h4"/><path d="M15 20h-11a2 2 0 0 1 -2 -2v-14a2 2 0 0 1 2 -2h7.5l5.5 5.5v10.5a2 2 0 0 1 -2 2z"/><path d="M6 8.5h2.5M6 12.5h7M6 16h7"/></g></svg>
<div class="t" style="left:381.80px;top:523.85px;font-size:15.80px;color:#2d3748;transform:scaleX(1.0353);transform-origin:0 0;letter-spacing:0.292px;">Asset Management Policy</div>
<div style="position:absolute;left:764.30px;top:516.52px;width:46.50px;height:29.30px;background:#f1f2f5;border-radius:9px"></div>
<div class="t" style="left:773.30px;top:523.85px;font-size:15.80px;color:#2d3748;transform:scaleX(0.9415);transform-origin:0 0;letter-spacing:-0.631px;">V1.0</div>
<svg style="position:absolute;left:882.00px;top:516.22px;" width="31.00" height="31.00" viewBox="0 0 31 31" fill="none"><defs><radialGradient id="av1" cx="50%" cy="42%" r="58%"><stop offset="0" stop-color="#f4fbfc"/><stop offset=".45" stop-color="#b9e1e4"/><stop offset=".8" stop-color="#4a9fa5"/><stop offset="1" stop-color="#1c767d"/></radialGradient><clipPath id="ac1"><circle cx="15.5" cy="15.5" r="15.2"/></clipPath></defs><circle cx="15.5" cy="15.5" r="15.2" fill="url(#av1)"/><g clip-path="url(#ac1)"><path d="M1 31 C2.5 24.5 7 22 12 21.3 L15.5 25 L19 21.3 C24 22 28.5 24.5 30 31 Z" fill="#e8eceb"/><path d="M12.6 22 L15.5 31 L18.4 22 L15.5 25.2 Z" fill="#c9d2de"/><path d="M13.1 17.5 h4.8 v4.6 l-2.4 2.7 l-2.4 -2.7z" fill="#c08a72"/><ellipse cx="15.6" cy="13.2" rx="4.9" ry="6.3" fill="#dba993"/><path d="M10.5 12.4 C9.8 6.8 12.3 4.4 15.8 4.4 C19.7 4.4 21.8 7.2 21 12.4 C20.3 9 18.2 8.6 15.6 8.7 C13 8.6 11.2 9.4 10.5 12.4Z" fill="#3b2a21"/><path d="M13.4 13.2 h1.3 M16.6 13.2 h1.3" stroke="#4a3a33" stroke-width=".9"/></g></svg>
<div class="t" style="left:921.80px;top:523.85px;font-size:15.80px;color:#2d3748;transform:scaleX(1.0104);transform-origin:0 0;letter-spacing:0.081px;">Ferry Haris</div>
<div class="t" style="left:1106.50px;top:523.85px;font-size:15.80px;color:#2d3748;transform:scaleX(1.0219);transform-origin:0 0;letter-spacing:0.180px;">9th May, 2026</div>
<div class="t" style="left:1330.00px;top:523.85px;font-size:15.80px;color:#2d3748;transform:scaleX(1.0126);transform-origin:0 0;letter-spacing:0.096px;">9th May, 2025 at 20:09:27</div>
<div style="position:absolute;left:1553.30px;top:515.52px;width:100.30px;height:31.40px;background:#dcfce7;border:1px solid #62a97a;border-radius:16px;box-sizing:border-box"></div>
<div class="t" style="left:1567.00px;top:523.85px;font-size:15.80px;color:#1e6d3b;transform:scaleX(1.0395);transform-origin:0 0;letter-spacing:0.380px;">Approved</div>
<div style="position:absolute;left:1794.00px;top:514.12px;width:42.70px;height:34.40px;background:#1aa34a;border-radius:10px"></div>
<svg style="position:absolute;left:1805.20px;top:520.92px;" width="21.00" height="21.00" viewBox="0 0 24 24" fill="none"><g stroke="#ffffff" stroke-width="1.95" stroke-linecap="round" stroke-linejoin="round"><path d="M10 12a2 2 0 1 0 4 0a2 2 0 0 0 -4 0"/><path d="M21 12c-2.4 4 -5.4 6 -9 6c-3.6 0 -6.6 -2 -9 -6c2.4 -4 5.4 -6 9 -6c3.6 0 6.6 2 9 6"/></g></svg>
<div style="position:absolute;left:1845.60px;top:514.12px;width:42.70px;height:34.40px;background:#0d6fd0;border-radius:10px"></div>
<svg style="position:absolute;left:1856.20px;top:520.52px;" width="21.00" height="21.00" viewBox="0 0 24 24" fill="none"><g stroke="#ffffff" stroke-width="1.7" stroke-linecap="round" stroke-linejoin="round"><path d="M19.5 7.2a2.1 2.1 0 0 0 -3 -3l-11.5 11.5a1.8 1.8 0 0 0 -.45 .75l-1.05 3.75l3.75 -1.05a1.8 1.8 0 0 0 .75 -.45z"/></g></svg>
<div style="position:absolute;left:1897.20px;top:514.12px;width:42.70px;height:34.40px;background:#f97316;border-radius:10px"></div>
<svg style="position:absolute;left:1909.50px;top:522.32px;" width="18.00" height="18.00" viewBox="0 0 24 24" fill="none"><g stroke="#ffffff" stroke-width="1.9" stroke-linecap="round" stroke-linejoin="round"><path d="M4 7l16 0"/><path d="M10 11l0 6" stroke-opacity="0"/><path d="M5 7l1 12a2 2 0 0 0 2 2h8a2 2 0 0 0 2 -2l1 -12"/><path d="M9 7v-3a1 1 0 0 1 1 -1h4a1 1 0 0 1 1 1v3"/></g></svg>
<div style="position:absolute;left:334.60px;top:563.00px;width:1639.40px;height:1.00px;background:#eceef2"></div>
<svg style="position:absolute;left:352.50px;top:584.67px;" width="19.00" height="22.00" viewBox="0 0 19 22" fill="none"><g stroke="#1f2937" stroke-width="1.9" fill="none" stroke-linecap="round" stroke-linejoin="round"><path d="M11.5 2v4.2a1 1 0 0 0 1 1h4"/><path d="M15 20h-11a2 2 0 0 1 -2 -2v-14a2 2 0 0 1 2 -2h7.5l5.5 5.5v10.5a2 2 0 0 1 -2 2z"/><path d="M6 8.5h2.5M6 12.5h7M6 16h7"/></g></svg>
<div class="t" style="left:381.80px;top:588.20px;font-size:15.80px;color:#2d3748;transform:scaleX(1.0369);transform-origin:0 0;letter-spacing:0.280px;">Data Retention Policy</div>
<div style="position:absolute;left:764.30px;top:580.88px;width:48.70px;height:29.30px;background:#f1f2f5;border-radius:9px"></div>
<div class="t" style="left:773.30px;top:588.20px;font-size:15.80px;color:#2d3748;transform:scaleX(0.9770);transform-origin:0 0;letter-spacing:-0.249px;">V0.2</div>
<div class="t" style="left:883.00px;top:588.20px;font-size:15.80px;color:#2d3748;">-</div>
<div class="t" style="left:1106.50px;top:588.20px;font-size:15.80px;color:#2d3748;transform:scaleX(1.0190);transform-origin:0 0;letter-spacing:0.157px;">30th May, 2026</div>
<div class="t" style="left:1330.00px;top:588.20px;font-size:15.80px;color:#2d3748;transform:scaleX(0.9833);transform-origin:0 0;letter-spacing:-0.128px;">30th May, 2025 at 12:14:16</div>
<div style="position:absolute;left:1553.30px;top:579.88px;width:65.00px;height:31.40px;background:#f3f4f6;border:1px solid #6b7280;border-radius:16px;box-sizing:border-box"></div>
<div class="t" style="left:1567.70px;top:588.20px;font-size:15.80px;color:#374151;transform:scaleX(1.0271);transform-origin:0 0;letter-spacing:0.231px;">Draft</div>
<div style="position:absolute;left:1794.00px;top:578.47px;width:42.70px;height:34.40px;background:#1aa34a;border-radius:10px"></div>
<svg style="position:absolute;left:1805.20px;top:585.27px;" width="21.00" height="21.00" viewBox="0 0 24 24" fill="none"><g stroke="#ffffff" stroke-width="1.95" stroke-linecap="round" stroke-linejoin="round"><path d="M10 12a2 2 0 1 0 4 0a2 2 0 0 0 -4 0"/><path d="M21 12c-2.4 4 -5.4 6 -9 6c-3.6 0 -6.6 -2 -9 -6c2.4 -4 5.4 -6 9 -6c3.6 0 6.6 2 9 6"/></g></svg>
<div style="position:absolute;left:1845.60px;top:578.47px;width:42.70px;height:34.40px;background:#0d6fd0;border-radius:10px"></div>
<svg style="position:absolute;left:1856.20px;top:584.88px;" width="21.00" height="21.00" viewBox="0 0 24 24" fill="none"><g stroke="#ffffff" stroke-width="1.7" stroke-linecap="round" stroke-linejoin="round"><path d="M19.5 7.2a2.1 2.1 0 0 0 -3 -3l-11.5 11.5a1.8 1.8 0 0 0 -.45 .75l-1.05 3.75l3.75 -1.05a1.8 1.8 0 0 0 .75 -.45z"/></g></svg>
<div style="position:absolute;left:1897.20px;top:578.47px;width:42.70px;height:34.40px;background:#f97316;border-radius:10px"></div>
<svg style="position:absolute;left:1909.50px;top:586.67px;" width="18.00" height="18.00" viewBox="0 0 24 24" fill="none"><g stroke="#ffffff" stroke-width="1.9" stroke-linecap="round" stroke-linejoin="round"><path d="M4 7l16 0"/><path d="M10 11l0 6" stroke-opacity="0"/><path d="M5 7l1 12a2 2 0 0 0 2 2h8a2 2 0 0 0 2 -2l1 -12"/><path d="M9 7v-3a1 1 0 0 1 1 -1h4a1 1 0 0 1 1 1v3"/></g></svg>
<div style="position:absolute;left:334.60px;top:627.00px;width:1639.40px;height:1.00px;background:#eceef2"></div>
<svg style="position:absolute;left:352.50px;top:649.02px;" width="19.00" height="22.00" viewBox="0 0 19 22" fill="none"><g stroke="#1f2937" stroke-width="1.9" fill="none" stroke-linecap="round" stroke-linejoin="round"><path d="M11.5 2v4.2a1 1 0 0 0 1 1h4"/><path d="M15 20h-11a2 2 0 0 1 -2 -2v-14a2 2 0 0 1 2 -2h7.5l5.5 5.5v10.5a2 2 0 0 1 -2 2z"/><path d="M6 8.5h2.5M6 12.5h7M6 16h7"/></g></svg>
<div class="t" style="left:381.80px;top:652.55px;font-size:15.80px;color:#2d3748;transform:scaleX(1.0408);transform-origin:0 0;letter-spacing:0.308px;">Encryption Policy</div>
<div style="position:absolute;left:764.30px;top:645.22px;width:45.70px;height:29.30px;background:#f1f2f5;border-radius:9px"></div>
<div class="t" style="left:773.30px;top:652.55px;font-size:15.80px;color:#2d3748;transform:scaleX(0.9283);transform-origin:0 0;letter-spacing:-0.774px;">V0.1</div>
<div class="t" style="left:883.00px;top:652.55px;font-size:15.80px;color:#2d3748;">-</div>
<div class="t" style="left:1106.50px;top:652.55px;font-size:15.80px;color:#2d3748;transform:scaleX(1.0205);transform-origin:0 0;letter-spacing:0.168px;">25th Aug, 2026</div>
<div class="t" style="left:1330.00px;top:652.55px;font-size:15.80px;color:#2d3748;letter-spacing:-0.013px;">25th Aug, 2025 at 17:10:40</div>
<div style="position:absolute;left:1553.30px;top:644.22px;width:65.00px;height:31.40px;background:#f3f4f6;border:1px solid #6b7280;border-radius:16px;box-sizing:border-box"></div>
<div class="t" style="left:1567.70px;top:652.55px;font-size:15.80px;color:#374151;transform:scaleX(1.0271);transform-origin:0 0;letter-spacing:0.231px;">Draft</div>
<div style="position:absolute;left:1794.00px;top:642.82px;width:42.70px;height:34.40px;background:#1aa34a;border-radius:10px"></div>
<svg style="position:absolute;left:1805.20px;top:649.62px;" width="21.00" height="21.00" viewBox="0 0 24 24" fill="none"><g stroke="#ffffff" stroke-width="1.95" stroke-linecap="round" stroke-linejoin="round"><path d="M10 12a2 2 0 1 0 4 0a2 2 0 0 0 -4 0"/><path d="M21 12c-2.4 4 -5.4 6 -9 6c-3.6 0 -6.6 -2 -9 -6c2.4 -4 5.4 -6 9 -6c3.6 0 6.6 2 9 6"/></g></svg>
<div style="position:absolute;left:1845.60px;top:642.82px;width:42.70px;height:34.40px;background:#0d6fd0;border-radius:10px"></div>
<svg style="position:absolute;left:1856.20px;top:649.22px;" width="21.00" height="21.00" viewBox="0 0 24 24" fill="none"><g stroke="#ffffff" stroke-width="1.7" stroke-linecap="round" stroke-linejoin="round"><path d="M19.5 7.2a2.1 2.1 0 0 0 -3 -3l-11.5 11.5a1.8 1.8 0 0 0 -.45 .75l-1.05 3.75l3.75 -1.05a1.8 1.8 0 0 0 .75 -.45z"/></g></svg>
<div style="position:absolute;left:1897.20px;top:642.82px;width:42.70px;height:34.40px;background:#f97316;border-radius:10px"></div>
<svg style="position:absolute;left:1909.50px;top:651.02px;" width="18.00" height="18.00" viewBox="0 0 24 24" fill="none"><g stroke="#ffffff" stroke-width="1.9" stroke-linecap="round" stroke-linejoin="round"><path d="M4 7l16 0"/><path d="M10 11l0 6" stroke-opacity="0"/><path d="M5 7l1 12a2 2 0 0 0 2 2h8a2 2 0 0 0 2 -2l1 -12"/><path d="M9 7v-3a1 1 0 0 1 1 -1h4a1 1 0 0 1 1 1v3"/></g></svg>
<div style="position:absolute;left:334.60px;top:692.00px;width:1639.40px;height:1.00px;background:#eceef2"></div>
<svg style="position:absolute;left:352.50px;top:713.37px;" width="19.00" height="22.00" viewBox="0 0 19 22" fill="none"><g stroke="#1f2937" stroke-width="1.9" fill="none" stroke-linecap="round" stroke-linejoin="round"><path d="M11.5 2v4.2a1 1 0 0 0 1 1h4"/><path d="M15 20h-11a2 2 0 0 1 -2 -2v-14a2 2 0 0 1 2 -2h7.5l5.5 5.5v10.5a2 2 0 0 1 -2 2z"/><path d="M6 8.5h2.5M6 12.5h7M6 16h7"/></g></svg>
<div class="t" style="left:381.80px;top:716.90px;font-size:15.80px;color:#2d3748;transform:scaleX(1.0394);transform-origin:0 0;letter-spacing:0.283px;">Information Security Policy</div>
<div style="position:absolute;left:764.30px;top:709.57px;width:45.70px;height:29.30px;background:#f1f2f5;border-radius:9px"></div>
<div class="t" style="left:773.30px;top:716.90px;font-size:15.80px;color:#2d3748;transform:scaleX(0.9283);transform-origin:0 0;letter-spacing:-0.774px;">V0.1</div>
<div class="t" style="left:883.00px;top:716.90px;font-size:15.80px;color:#2d3748;">-</div>
<div class="t" style="left:1106.50px;top:716.90px;font-size:15.80px;color:#2d3748;transform:scaleX(1.0039);transform-origin:0 0;letter-spacing:0.033px;">2nd Sep, 2026</div>
<div class="t" style="left:1330.00px;top:716.90px;font-size:15.80px;color:#2d3748;transform:scaleX(0.9875);transform-origin:0 0;letter-spacing:-0.097px;">2nd Sep, 2025 at 16:52:56</div>
<div style="position:absolute;left:1553.30px;top:708.57px;width:65.00px;height:31.40px;background:#f3f4f6;border:1px solid #6b7280;border-radius:16px;box-sizing:border-box"></div>
<div class="t" style="left:1567.70px;top:716.90px;font-size:15.80px;color:#374151;transform:scaleX(1.0271);transform-origin:0 0;letter-spacing:0.231px;">Draft</div>
<div style="position:absolute;left:1794.00px;top:707.17px;width:42.70px;height:34.40px;background:#1aa34a;border-radius:10px"></div>
<svg style="position:absolute;left:1805.20px;top:713.97px;" width="21.00" height="21.00" viewBox="0 0 24 24" fill="none"><g stroke="#ffffff" stroke-width="1.95" stroke-linecap="round" stroke-linejoin="round"><path d="M10 12a2 2 0 1 0 4 0a2 2 0 0 0 -4 0"/><path d="M21 12c-2.4 4 -5.4 6 -9 6c-3.6 0 -6.6 -2 -9 -6c2.4 -4 5.4 -6 9 -6c3.6 0 6.6 2 9 6"/></g></svg>
<div style="position:absolute;left:1845.60px;top:707.17px;width:42.70px;height:34.40px;background:#0d6fd0;border-radius:10px"></div>
<svg style="position:absolute;left:1856.20px;top:713.57px;" width="21.00" height="21.00" viewBox="0 0 24 24" fill="none"><g stroke="#ffffff" stroke-width="1.7" stroke-linecap="round" stroke-linejoin="round"><path d="M19.5 7.2a2.1 2.1 0 0 0 -3 -3l-11.5 11.5a1.8 1.8 0 0 0 -.45 .75l-1.05 3.75l3.75 -1.05a1.8 1.8 0 0 0 .75 -.45z"/></g></svg>
<div style="position:absolute;left:1897.20px;top:707.17px;width:42.70px;height:34.40px;background:#f97316;border-radius:10px"></div>
<svg style="position:absolute;left:1909.50px;top:715.37px;" width="18.00" height="18.00" viewBox="0 0 24 24" fill="none"><g stroke="#ffffff" stroke-width="1.9" stroke-linecap="round" stroke-linejoin="round"><path d="M4 7l16 0"/><path d="M10 11l0 6" stroke-opacity="0"/><path d="M5 7l1 12a2 2 0 0 0 2 2h8a2 2 0 0 0 2 -2l1 -12"/><path d="M9 7v-3a1 1 0 0 1 1 -1h4a1 1 0 0 1 1 1v3"/></g></svg>
<div style="position:absolute;left:334.60px;top:756.00px;width:1639.40px;height:1.00px;background:#eceef2"></div>
<svg style="position:absolute;left:352.50px;top:777.72px;" width="19.00" height="22.00" viewBox="0 0 19 22" fill="none"><g stroke="#1f2937" stroke-width="1.9" fill="none" stroke-linecap="round" stroke-linejoin="round"><path d="M11.5 2v4.2a1 1 0 0 0 1 1h4"/><path d="M15 20h-11a2 2 0 0 1 -2 -2v-14a2 2 0 0 1 2 -2h7.5l5.5 5.5v10.5a2 2 0 0 1 -2 2z"/><path d="M6 8.5h2.5M6 12.5h7M6 16h7"/></g></svg>
<div class="t" style="left:381.80px;top:781.25px;font-size:15.80px;color:#2d3748;transform:scaleX(1.0334);transform-origin:0 0;letter-spacing:0.251px;">Network Security Policy</div>
<div class="t" style="left:765.50px;top:781.25px;font-size:15.80px;color:#2d3748;">-</div>
<div class="t" style="left:883.00px;top:781.25px;font-size:15.80px;color:#2d3748;">-</div>
<div class="t" style="left:1107.00px;top:781.25px;font-size:15.80px;color:#2d3748;">-</div>
<div class="t" style="left:1330.50px;top:781.25px;font-size:15.80px;color:#2d3748;">-</div>
<div style="position:absolute;left:1553.30px;top:772.92px;width:65.00px;height:31.40px;background:#f3f4f6;border:1px solid #6b7280;border-radius:16px;box-sizing:border-box"></div>
<div class="t" style="left:1567.70px;top:781.25px;font-size:15.80px;color:#374151;transform:scaleX(1.0271);transform-origin:0 0;letter-spacing:0.231px;">Draft</div>
<div style="position:absolute;left:1788.00px;top:771.42px;width:102.40px;height:34.60px;background:#0d6fd0;border-radius:10px"></div>
<div class="t" style="left:1801.30px;top:782.48px;font-size:13.40px;color:#ffffff;transform:scaleX(1.0319);transform-origin:0 0;-webkit-text-stroke:0.1px #ffffff;letter-spacing:0.228px;">Generate AI</div>
<div style="position:absolute;left:1903.50px;top:771.42px;width:42.90px;height:34.60px;background:#f97316;border-radius:10px"></div>
<svg style="position:absolute;left:1915.90px;top:779.72px;" width="18.00" height="18.00" viewBox="0 0 24 24" fill="none"><g stroke="#ffffff" stroke-width="1.9" stroke-linecap="round" stroke-linejoin="round"><path d="M4 7l16 0"/><path d="M10 11l0 6" stroke-opacity="0"/><path d="M5 7l1 12a2 2 0 0 0 2 2h8a2 2 0 0 0 2 -2l1 -12"/><path d="M9 7v-3a1 1 0 0 1 1 -1h4a1 1 0 0 1 1 1v3"/></g></svg>
<div style="position:absolute;left:334.60px;top:820.00px;width:1639.40px;height:1.00px;background:#eceef2"></div>
<svg style="position:absolute;left:352.50px;top:842.07px;" width="19.00" height="22.00" viewBox="0 0 19 22" fill="none"><g stroke="#1f2937" stroke-width="1.9" fill="none" stroke-linecap="round" stroke-linejoin="round"><path d="M11.5 2v4.2a1 1 0 0 0 1 1h4"/><path d="M15 20h-11a2 2 0 0 1 -2 -2v-14a2 2 0 0 1 2 -2h7.5l5.5 5.5v10.5a2 2 0 0 1 -2 2z"/><path d="M6 8.5h2.5M6 12.5h7M6 16h7"/></g></svg>
<div class="t" style="left:381.80px;top:845.60px;font-size:15.80px;color:#2d3748;transform:scaleX(0.9866);transform-origin:0 0;letter-spacing:-0.131px;">ONLY TESTING POLICY</div>
<div style="position:absolute;left:764.30px;top:838.27px;width:46.50px;height:29.30px;background:#f1f2f5;border-radius:9px"></div>
<div class="t" style="left:773.30px;top:845.60px;font-size:15.80px;color:#2d3748;transform:scaleX(0.9415);transform-origin:0 0;letter-spacing:-0.631px;">V1.0</div>
<svg style="position:absolute;left:882.00px;top:837.97px;" width="31.00" height="31.00" viewBox="0 0 31 31" fill="none"><defs><radialGradient id="av6" cx="50%" cy="42%" r="58%"><stop offset="0" stop-color="#f4fbfc"/><stop offset=".45" stop-color="#b9e1e4"/><stop offset=".8" stop-color="#4a9fa5"/><stop offset="1" stop-color="#1c767d"/></radialGradient><clipPath id="ac6"><circle cx="15.5" cy="15.5" r="15.2"/></clipPath></defs><circle cx="15.5" cy="15.5" r="15.2" fill="url(#av6)"/><g clip-path="url(#ac6)"><path d="M1 31 C2.5 24.5 7 22 12 21.3 L15.5 25 L19 21.3 C24 22 28.5 24.5 30 31 Z" fill="#e8eceb"/><path d="M12.6 22 L15.5 31 L18.4 22 L15.5 25.2 Z" fill="#c9d2de"/><path d="M13.1 17.5 h4.8 v4.6 l-2.4 2.7 l-2.4 -2.7z" fill="#c08a72"/><ellipse cx="15.6" cy="13.2" rx="4.9" ry="6.3" fill="#dba993"/><path d="M10.5 12.4 C9.8 6.8 12.3 4.4 15.8 4.4 C19.7 4.4 21.8 7.2 21 12.4 C20.3 9 18.2 8.6 15.6 8.7 C13 8.6 11.2 9.4 10.5 12.4Z" fill="#3b2a21"/><path d="M13.4 13.2 h1.3 M16.6 13.2 h1.3" stroke="#4a3a33" stroke-width=".9"/></g></svg>
<div class="t" style="left:921.80px;top:845.60px;font-size:15.80px;color:#2d3748;transform:scaleX(1.0104);transform-origin:0 0;letter-spacing:0.081px;">Ferry Haris</div>
<div class="t" style="left:1106.50px;top:845.60px;font-size:15.80px;color:#2d3748;transform:scaleX(1.0046);transform-origin:0 0;letter-spacing:0.037px;">19th Nov, 2026</div>
<div class="t" style="left:1330.00px;top:845.60px;font-size:15.80px;color:#2d3748;transform:scaleX(0.9865);transform-origin:0 0;letter-spacing:-0.101px;">19th Nov, 2025 at 11:29:06</div>
<div style="position:absolute;left:1553.30px;top:837.27px;width:100.30px;height:31.40px;background:#dcfce7;border:1px solid #62a97a;border-radius:16px;box-sizing:border-box"></div>
<div class="t" style="left:1567.00px;top:845.60px;font-size:15.80px;color:#1e6d3b;transform:scaleX(1.0395);transform-origin:0 0;letter-spacing:0.380px;">Approved</div>
<div style="position:absolute;left:1794.00px;top:835.87px;width:42.70px;height:34.40px;background:#1aa34a;border-radius:10px"></div>
<svg style="position:absolute;left:1805.20px;top:842.67px;" width="21.00" height="21.00" viewBox="0 0 24 24" fill="none"><g stroke="#ffffff" stroke-width="1.95" stroke-linecap="round" stroke-linejoin="round"><path d="M10 12a2 2 0 1 0 4 0a2 2 0 0 0 -4 0"/><path d="M21 12c-2.4 4 -5.4 6 -9 6c-3.6 0 -6.6 -2 -9 -6c2.4 -4 5.4 -6 9 -6c3.6 0 6.6 2 9 6"/></g></svg>
<div style="position:absolute;left:1845.60px;top:835.87px;width:42.70px;height:34.40px;background:#0d6fd0;border-radius:10px"></div>
<svg style="position:absolute;left:1856.20px;top:842.27px;" width="21.00" height="21.00" viewBox="0 0 24 24" fill="none"><g stroke="#ffffff" stroke-width="1.7" stroke-linecap="round" stroke-linejoin="round"><path d="M19.5 7.2a2.1 2.1 0 0 0 -3 -3l-11.5 11.5a1.8 1.8 0 0 0 -.45 .75l-1.05 3.75l3.75 -1.05a1.8 1.8 0 0 0 .75 -.45z"/></g></svg>
<div style="position:absolute;left:1897.20px;top:835.87px;width:42.70px;height:34.40px;background:#f97316;border-radius:10px"></div>
<svg style="position:absolute;left:1909.50px;top:844.07px;" width="18.00" height="18.00" viewBox="0 0 24 24" fill="none"><g stroke="#ffffff" stroke-width="1.9" stroke-linecap="round" stroke-linejoin="round"><path d="M4 7l16 0"/><path d="M10 11l0 6" stroke-opacity="0"/><path d="M5 7l1 12a2 2 0 0 0 2 2h8a2 2 0 0 0 2 -2l1 -12"/><path d="M9 7v-3a1 1 0 0 1 1 -1h4a1 1 0 0 1 1 1v3"/></g></svg>
<div style="position:absolute;left:334.60px;top:885.00px;width:1639.40px;height:1.00px;background:#eceef2"></div>
<svg style="position:absolute;left:352.50px;top:906.42px;" width="19.00" height="22.00" viewBox="0 0 19 22" fill="none"><g stroke="#1f2937" stroke-width="1.9" fill="none" stroke-linecap="round" stroke-linejoin="round"><path d="M11.5 2v4.2a1 1 0 0 0 1 1h4"/><path d="M15 20h-11a2 2 0 0 1 -2 -2v-14a2 2 0 0 1 2 -2h7.5l5.5 5.5v10.5a2 2 0 0 1 -2 2z"/><path d="M6 8.5h2.5M6 12.5h7M6 16h7"/></g></svg>
<div class="t" style="left:381.80px;top:909.95px;font-size:15.80px;color:#2d3748;transform:scaleX(1.0210);transform-origin:0 0;letter-spacing:0.173px;">Password Policy</div>
<div class="t" style="left:765.50px;top:909.95px;font-size:15.80px;color:#2d3748;">-</div>
<div class="t" style="left:883.00px;top:909.95px;font-size:15.80px;color:#2d3748;">-</div>
<div class="t" style="left:1107.00px;top:909.95px;font-size:15.80px;color:#2d3748;">-</div>
<div class="t" style="left:1330.50px;top:909.95px;font-size:15.80px;color:#2d3748;">-</div>
<div style="position:absolute;left:1553.30px;top:901.62px;width:65.00px;height:31.40px;background:#f3f4f6;border:1px solid #6b7280;border-radius:16px;box-sizing:border-box"></div>
<div class="t" style="left:1567.70px;top:909.95px;font-size:15.80px;color:#374151;transform:scaleX(1.0271);transform-origin:0 0;letter-spacing:0.231px;">Draft</div>
<div style="position:absolute;left:1788.00px;top:900.12px;width:102.40px;height:34.60px;background:#0d6fd0;border-radius:10px"></div>
<div class="t" style="left:1801.30px;top:911.18px;font-size:13.40px;color:#ffffff;transform:scaleX(1.0319);transform-origin:0 0;-webkit-text-stroke:0.1px #ffffff;letter-spacing:0.228px;">Generate AI</div>
<div style="position:absolute;left:1903.50px;top:900.12px;width:42.90px;height:34.60px;background:#f97316;border-radius:10px"></div>
<svg style="position:absolute;left:1915.90px;top:908.42px;" width="18.00" height="18.00" viewBox="0 0 24 24" fill="none"><g stroke="#ffffff" stroke-width="1.9" stroke-linecap="round" stroke-linejoin="round"><path d="M4 7l16 0"/><path d="M10 11l0 6" stroke-opacity="0"/><path d="M5 7l1 12a2 2 0 0 0 2 2h8a2 2 0 0 0 2 -2l1 -12"/><path d="M9 7v-3a1 1 0 0 1 1 -1h4a1 1 0 0 1 1 1v3"/></g></svg>
<div style="position:absolute;left:334.60px;top:949.00px;width:1639.40px;height:1.00px;background:#eceef2"></div>
<svg style="position:absolute;left:352.50px;top:970.77px;" width="19.00" height="22.00" viewBox="0 0 19 22" fill="none"><g stroke="#1f2937" stroke-width="1.9" fill="none" stroke-linecap="round" stroke-linejoin="round"><path d="M11.5 2v4.2a1 1 0 0 0 1 1h4"/><path d="M15 20h-11a2 2 0 0 1 -2 -2v-14a2 2 0 0 1 2 -2h7.5l5.5 5.5v10.5a2 2 0 0 1 -2 2z"/><path d="M6 8.5h2.5M6 12.5h7M6 16h7"/></g></svg>
<div class="t" style="left:381.80px;top:974.30px;font-size:15.80px;color:#2d3748;transform:scaleX(1.0222);transform-origin:0 0;letter-spacing:0.160px;">Physical Security Policy</div>
<div style="position:absolute;left:764.30px;top:966.97px;width:45.70px;height:29.30px;background:#f1f2f5;border-radius:9px"></div>
<div class="t" style="left:773.30px;top:974.30px;font-size:15.80px;color:#2d3748;transform:scaleX(0.9283);transform-origin:0 0;letter-spacing:-0.774px;">V0.1</div>
<div class="t" style="left:883.00px;top:974.30px;font-size:15.80px;color:#2d3748;">-</div>
<div class="t" style="left:1106.50px;top:974.30px;font-size:15.80px;color:#2d3748;transform:scaleX(1.0285);transform-origin:0 0;letter-spacing:0.223px;">24th Apr, 2026</div>
<div class="t" style="left:1330.00px;top:974.30px;font-size:15.80px;color:#2d3748;transform:scaleX(0.9840);transform-origin:0 0;letter-spacing:-0.118px;">24th Apr, 2025 at 15:41:13</div>
<div style="position:absolute;left:1553.30px;top:965.97px;width:65.00px;height:31.40px;background:#f3f4f6;border:1px solid #6b7280;border-radius:16px;box-sizing:border-box"></div>
<div class="t" style="left:1567.70px;top:974.30px;font-size:15.80px;color:#374151;transform:scaleX(1.0271);transform-origin:0 0;letter-spacing:0.231px;">Draft</div>
<div style="position:absolute;left:1794.00px;top:964.57px;width:42.70px;height:34.40px;background:#1aa34a;border-radius:10px"></div>
<svg style="position:absolute;left:1805.20px;top:971.37px;" width="21.00" height="21.00" viewBox="0 0 24 24" fill="none"><g stroke="#ffffff" stroke-width="1.95" stroke-linecap="round" stroke-linejoin="round"><path d="M10 12a2 2 0 1 0 4 0a2 2 0 0 0 -4 0"/><path d="M21 12c-2.4 4 -5.4 6 -9 6c-3.6 0 -6.6 -2 -9 -6c2.4 -4 5.4 -6 9 -6c3.6 0 6.6 2 9 6"/></g></svg>
<div style="position:absolute;left:1845.60px;top:964.57px;width:42.70px;height:34.40px;background:#0d6fd0;border-radius:10px"></div>
<svg style="position:absolute;left:1856.20px;top:970.97px;" width="21.00" height="21.00" viewBox="0 0 24 24" fill="none"><g stroke="#ffffff" stroke-width="1.7" stroke-linecap="round" stroke-linejoin="round"><path d="M19.5 7.2a2.1 2.1 0 0 0 -3 -3l-11.5 11.5a1.8 1.8 0 0 0 -.45 .75l-1.05 3.75l3.75 -1.05a1.8 1.8 0 0 0 .75 -.45z"/></g></svg>
<div style="position:absolute;left:1897.20px;top:964.57px;width:42.70px;height:34.40px;background:#f97316;border-radius:10px"></div>
<svg style="position:absolute;left:1909.50px;top:972.77px;" width="18.00" height="18.00" viewBox="0 0 24 24" fill="none"><g stroke="#ffffff" stroke-width="1.9" stroke-linecap="round" stroke-linejoin="round"><path d="M4 7l16 0"/><path d="M10 11l0 6" stroke-opacity="0"/><path d="M5 7l1 12a2 2 0 0 0 2 2h8a2 2 0 0 0 2 -2l1 -12"/><path d="M9 7v-3a1 1 0 0 1 1 -1h4a1 1 0 0 1 1 1v3"/></g></svg>
<div style="position:absolute;left:334.60px;top:1013.00px;width:1639.40px;height:1.00px;background:#eceef2"></div>
<svg style="position:absolute;left:352.50px;top:1035.12px;" width="19.00" height="22.00" viewBox="0 0 19 22" fill="none"><g stroke="#1f2937" stroke-width="1.9" fill="none" stroke-linecap="round" stroke-linejoin="round"><path d="M11.5 2v4.2a1 1 0 0 0 1 1h4"/><path d="M15 20h-11a2 2 0 0 1 -2 -2v-14a2 2 0 0 1 2 -2h7.5l5.5 5.5v10.5a2 2 0 0 1 -2 2z"/><path d="M6 8.5h2.5M6 12.5h7M6 16h7"/></g></svg>
<div class="t" style="left:381.80px;top:1038.65px;font-size:15.80px;color:#2d3748;transform:scaleX(1.0237);transform-origin:0 0;letter-spacing:0.178px;">Responsible Disclosure Policy</div>
<div style="position:absolute;left:764.30px;top:1031.33px;width:45.70px;height:29.30px;background:#f1f2f5;border-radius:9px"></div>
<div class="t" style="left:773.30px;top:1038.65px;font-size:15.80px;color:#2d3748;transform:scaleX(0.9283);transform-origin:0 0;letter-spacing:-0.774px;">V0.1</div>
<div class="t" style="left:883.00px;top:1038.65px;font-size:15.80px;color:#2d3748;">-</div>
<div class="t" style="left:1106.50px;top:1038.65px;font-size:15.80px;color:#2d3748;transform:scaleX(1.0237);transform-origin:0 0;letter-spacing:0.185px;">25th Apr, 2026</div>
<div class="t" style="left:1330.00px;top:1038.65px;font-size:15.80px;color:#2d3748;transform:scaleX(0.9931);transform-origin:0 0;letter-spacing:-0.051px;">25th Apr, 2025 at 14:16:23</div>
<div style="position:absolute;left:1553.30px;top:1030.33px;width:65.00px;height:31.40px;background:#f3f4f6;border:1px solid #6b7280;border-radius:16px;box-sizing:border-box"></div>
<div class="t" style="left:1567.70px;top:1038.65px;font-size:15.80px;color:#374151;transform:scaleX(1.0271);transform-origin:0 0;letter-spacing:0.231px;">Draft</div>
<div style="position:absolute;left:1794.00px;top:1028.92px;width:42.70px;height:34.40px;background:#1aa34a;border-radius:10px"></div>
<svg style="position:absolute;left:1805.20px;top:1035.72px;" width="21.00" height="21.00" viewBox="0 0 24 24" fill="none"><g stroke="#ffffff" stroke-width="1.95" stroke-linecap="round" stroke-linejoin="round"><path d="M10 12a2 2 0 1 0 4 0a2 2 0 0 0 -4 0"/><path d="M21 12c-2.4 4 -5.4 6 -9 6c-3.6 0 -6.6 -2 -9 -6c2.4 -4 5.4 -6 9 -6c3.6 0 6.6 2 9 6"/></g></svg>
<div style="position:absolute;left:1845.60px;top:1028.92px;width:42.70px;height:34.40px;background:#0d6fd0;border-radius:10px"></div>
<svg style="position:absolute;left:1856.20px;top:1035.33px;" width="21.00" height="21.00" viewBox="0 0 24 24" fill="none"><g stroke="#ffffff" stroke-width="1.7" stroke-linecap="round" stroke-linejoin="round"><path d="M19.5 7.2a2.1 2.1 0 0 0 -3 -3l-11.5 11.5a1.8 1.8 0 0 0 -.45 .75l-1.05 3.75l3.75 -1.05a1.8 1.8 0 0 0 .75 -.45z"/></g></svg>
<div style="position:absolute;left:1897.20px;top:1028.92px;width:42.70px;height:34.40px;background:#f97316;border-radius:10px"></div>
<svg style="position:absolute;left:1909.50px;top:1037.12px;" width="18.00" height="18.00" viewBox="0 0 24 24" fill="none"><g stroke="#ffffff" stroke-width="1.9" stroke-linecap="round" stroke-linejoin="round"><path d="M4 7l16 0"/><path d="M10 11l0 6" stroke-opacity="0"/><path d="M5 7l1 12a2 2 0 0 0 2 2h8a2 2 0 0 0 2 -2l1 -12"/><path d="M9 7v-3a1 1 0 0 1 1 -1h4a1 1 0 0 1 1 1v3"/></g></svg>
<div style="position:absolute;left:334.60px;top:1078.00px;width:1639.40px;height:1.00px;background:#eceef2"></div>
<div class="t" style="left:1586.00px;top:1101.64px;font-size:14.60px;color:#6e6e6e;transform:scaleX(1.0083);transform-origin:0 0;letter-spacing:0.084px;">Show:</div>
<div class="t" style="left:1640.80px;top:1101.64px;font-size:14.60px;color:#565656;transform:scaleX(0.9115);transform-origin:0 0;letter-spacing:-1.439px;">10</div>
<svg style="position:absolute;left:1666.00px;top:1104.00px;" width="12.00" height="10.00" viewBox="0 0 12 10" fill="none"><path d="M1 2 H11 L6 8 Z" fill="#666666"/></svg>
<div class="t" style="left:1711.00px;top:1101.64px;font-size:14.60px;color:#6e6e6e;transform:scaleX(0.9335);transform-origin:0 0;letter-spacing:-0.487px;">1-10 of 12</div>
<svg style="position:absolute;left:1800.00px;top:1095.00px;" width="160.00" height="30.00" viewBox="0 0 160 30" fill="none"><g fill="none" stroke-width="2.3" stroke-linecap="butt" stroke-linejoin="miter"><path d="M10.4 8 V19.5" stroke="#cdcdcd"/><path d="M21.5 8.3 L16 13.7 L21.5 19.2" stroke="#cdcdcd"/><path d="M61 8.3 L55.6 13.7 L61 19.2" stroke="#cdcdcd"/><path d="M99 8.3 L104.6 13.7 L99 19.2" stroke="#5f5f5f"/><path d="M139 8.3 L144.4 13.7 L139 19.2" stroke="#5f5f5f"/><path d="M149.8 8 V19.5" stroke="#5f5f5f"/></g></svg>
</body></html>
